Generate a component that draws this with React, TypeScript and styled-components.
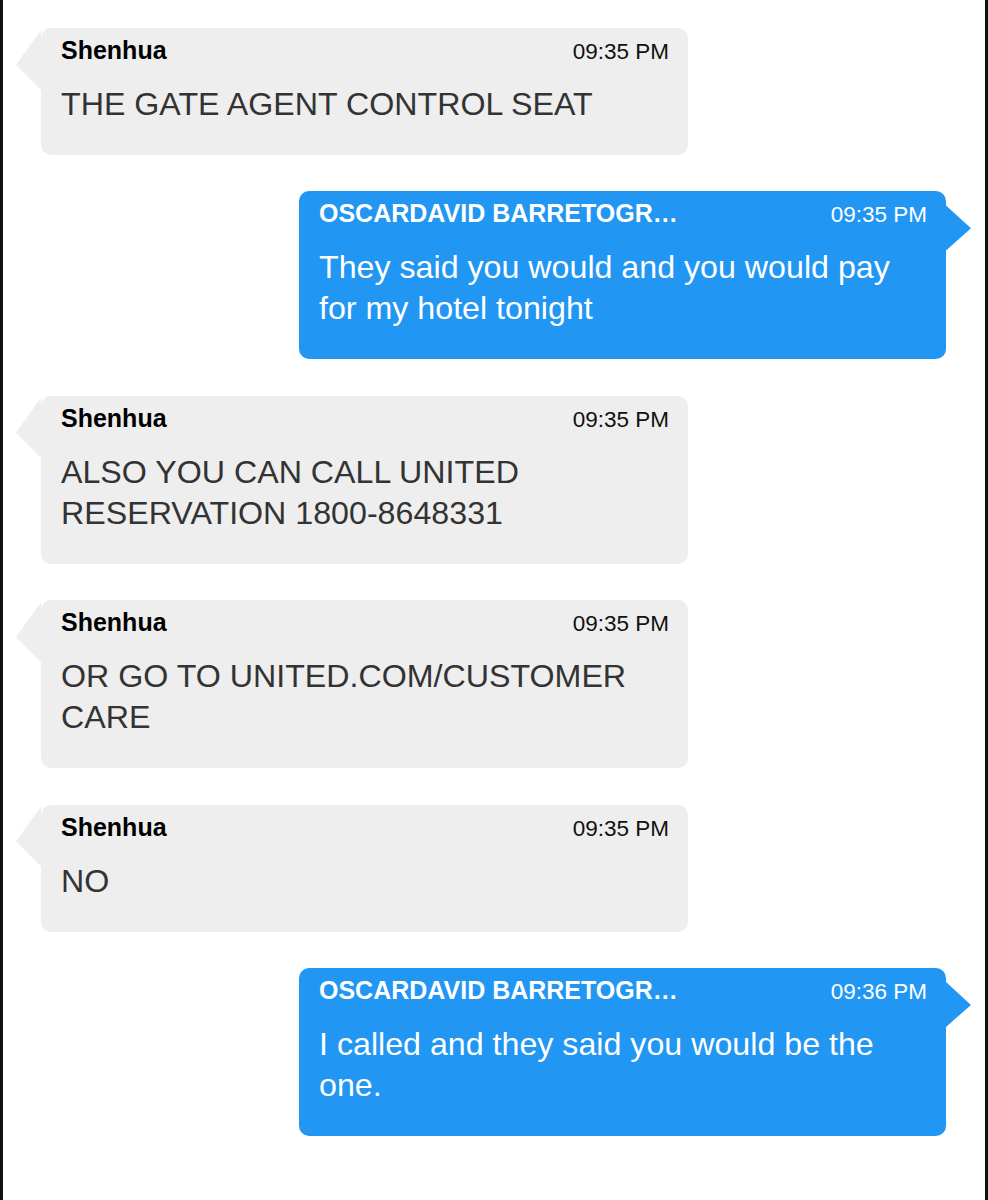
import React from "react";
import styled, { createGlobalStyle, css } from "styled-components";

type Message = {
  id: number;
  mine: boolean;
  name: string;
  time: string;
  text: string[];
};

const messages: Message[] = [
  { id: 1, mine: false, name: "Shenhua", time: "09:35 PM", text: ["THE GATE AGENT CONTROL SEAT"] },
  {
    id: 2,
    mine: true,
    name: "OSCARDAVID BARRETOGR…",
    time: "09:35 PM",
    text: ["They said you would and you would pay", "for my hotel tonight"],
  },
  {
    id: 3,
    mine: false,
    name: "Shenhua",
    time: "09:35 PM",
    text: ["ALSO YOU CAN CALL UNITED", "RESERVATION 1800-8648331"],
  },
  {
    id: 4,
    mine: false,
    name: "Shenhua",
    time: "09:35 PM",
    text: ["OR GO TO UNITED.COM/CUSTOMER", "CARE"],
  },
  { id: 5, mine: false, name: "Shenhua", time: "09:35 PM", text: ["NO"] },
  {
    id: 6,
    mine: true,
    name: "OSCARDAVID BARRETOGR…",
    time: "09:36 PM",
    text: ["I called and they said you would be the", "one."],
  },
];

export default function App() {
  return (
    <>
      <GlobalStyle />
      <Thread>
        {messages.map((m) => (
          <Bubble key={m.id} $mine={m.mine}>
            <Header>
              <Name $mine={m.mine}>{m.name}</Name>
              <Time $mine={m.mine}>{m.time}</Time>
            </Header>
            <Body $mine={m.mine}>
              {m.text.map((line, i) => (
                <Line key={i}>{line}</Line>
              ))}
            </Body>
          </Bubble>
        ))}
      </Thread>
    </>
  );
}

const GlobalStyle = createGlobalStyle`
  html, body {
    margin: 0;
    padding: 0;
    background: #ffffff;
    font-family: "Liberation Sans", Arial, sans-serif;
  }
  * {
    box-sizing: border-box;
  }
`;

const Thread = styled.div`
  min-height: 1200px;
  border-left: 3px solid #111;
  border-right: 3px solid #111;
  padding: 28px 39px 40px 38px;
  display: flex;
  flex-direction: column;
  gap: 36.4px;
`;

const Bubble = styled.div<{ $mine: boolean }>`
  position: relative;
  width: 647px;
  border-radius: 10px;
  padding: 8px 19px 30px 20px;
  background: ${(p) => (p.$mine ? "#2196f3" : "#eeeeee")};
  align-self: ${(p) => (p.$mine ? "flex-end" : "flex-start")};

  &::before {
    content: "";
    position: absolute;
    width: 25px;
    background: inherit;
    ${(p) =>
      p.$mine
        ? css`
            right: -25px;
            top: 14px;
            height: 45px;
            clip-path: polygon(0 0, 100% 51%, 0 100%);
          `
        : css`
            left: -25px;
            top: 2px;
            height: 60px;
            clip-path: polygon(100% 0, 0 58%, 100% 100%);
          `}
  }
`;

const Header = styled.div`
  display: flex;
  justify-content: space-between;
  align-items: baseline;
  height: 28px;
  line-height: 28px;
`;

const Name = styled.span<{ $mine: boolean }>`
  font-size: 25px;
  font-weight: 700;
  color: ${(p) => (p.$mine ? "#ffffff" : "#000000")};
  white-space: nowrap;
`;

const Time = styled.span<{ $mine: boolean }>`
  font-size: 22.5px;
  color: ${(p) => (p.$mine ? "#ffffff" : "#111111")};
  white-space: nowrap;
`;

const Body = styled.div<{ $mine: boolean }>`
  margin-top: 20px;
  font-size: 32.2px;
  line-height: 41px;
  color: ${(p) => (p.$mine ? "#ffffff" : "#333333")};
`;

const Line = styled.div`
  white-space: nowrap;
`;
